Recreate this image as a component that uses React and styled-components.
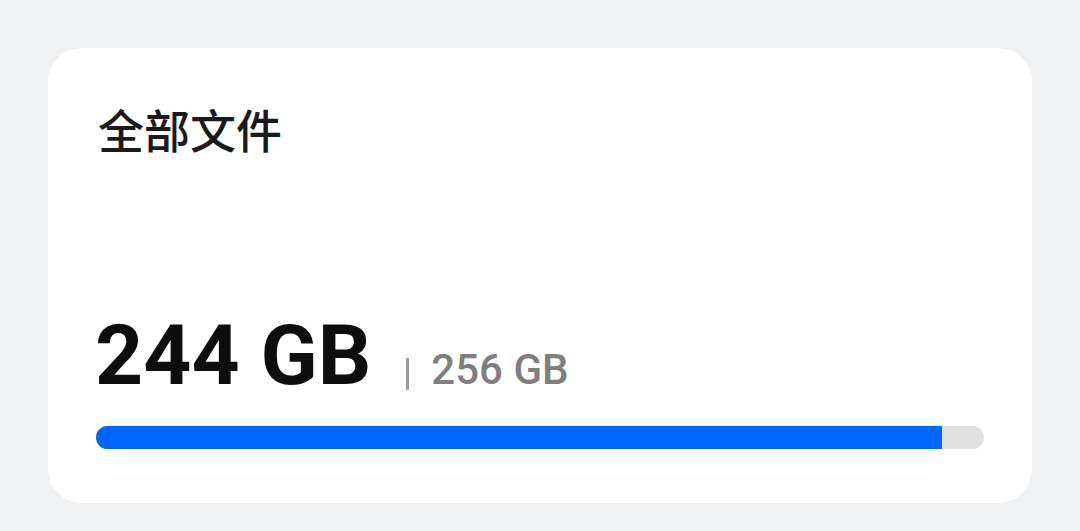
import React from "react";
import styled, { createGlobalStyle } from "styled-components";

const GlobalStyle = createGlobalStyle`
  html, body {
    margin: 0;
    padding: 0;
    background: #eef0f2;
  }
  body {
    font-family: Roboto, "Noto Sans CJK SC", sans-serif;
  }
`;

const Page = styled.div`
  padding: 48px;
  height: 531px;
  box-sizing: border-box;
`;

const Card = styled.section`
  background: #ffffff;
  border-radius: 34px;
  height: 455px;
  box-sizing: border-box;
  padding: 57px 48px 54px 50px;
  display: flex;
  flex-direction: column;
  justify-content: space-between;
`;

const Title = styled.h2`
  margin: 0;
  font-family: "Noto Sans CJK SC", sans-serif;
  font-weight: 500;
  font-size: 46px;
  line-height: 46px;
  color: #1a1a1a;
`;

const Usage = styled.div`
  display: flex;
  flex-direction: column;
  gap: 28px;
`;

const Numbers = styled.div`
  display: flex;
  align-items: baseline;
`;

const Used = styled.span`
  font-size: 84px;
  font-weight: 700;
  line-height: 1;
  color: #0d0d0d;
  margin-left: -3px;
`;

const Divider = styled.span`
  width: 3px;
  height: 32px;
  background: #9a9a9a;
  margin: 0 22px 8px 35px;
  align-self: flex-end;
`;

const Total = styled.span`
  font-size: 42px;
  font-weight: 500;
  line-height: 1;
  color: #7f7f7f;
`;

const Track = styled.div`
  height: 23px;
  border-radius: 12px;
  background: #e0e0e0;
  overflow: hidden;
  margin-left: -2px;
`;

const Fill = styled.div`
  height: 100%;
  background: #0066ff;
`;

export default function App() {
  const used = 244;
  const total = 256;
  return (
    <>
      <GlobalStyle />
      <Page>
        <Card>
          <Title>全部文件</Title>
          <Usage>
            <Numbers>
              <Used>{used} GB</Used>
              <Divider />
              <Total>{total} GB</Total>
            </Numbers>
            <Track>
              <Fill style={{ width: `${(used / total) * 100}%` }} />
            </Track>
          </Usage>
        </Card>
      </Page>
    </>
  );
}
